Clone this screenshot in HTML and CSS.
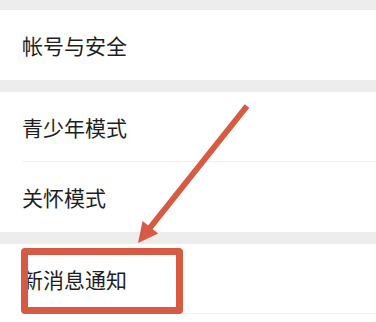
FILE: index.html
```html
<!DOCTYPE html>
<html lang="zh-CN">
<head>
    <meta charset="UTF-8">
    <meta name="viewport" content="width=device-width, initial-scale=1.0">
    <title>设置</title>
    <link rel="stylesheet" href="styles.css">
</head>
<body>
    <div class="settings">
        <!-- 分组间隔 -->
        <div class="gap gap-top"></div>
        <div class="group">
            <div class="item">帐号与安全</div>
        </div>

        <div class="gap"></div>
        <div class="group">
            <div class="item line">青少年模式</div>
            <div class="item">关怀模式</div>
        </div>

        <div class="gap"></div>
        <div class="group">
            <div class="item line">新消息通知</div>
        </div>

        <!-- 标注：红框 + 箭头 -->
        <div class="mark-box"></div>
        <svg class="mark-arrow" width="376" height="322" viewBox="0 0 376 322">
            <line x1="247" y1="106" x2="149" y2="229" stroke="#d75a43" stroke-width="6" stroke-linecap="butt"/>
            <polygon points="138,243 142.6,221.1 158.2,233.5" fill="#d75a43"/>
        </svg>
    </div>
</body>
</html>
```

FILE: styles.css
```css
/* 全局样式 */
body, html {
    margin: 0;
    padding: 0;
    height: 100%;
    overflow: hidden;
    background: #ffffff;
    font-family: 'Noto Sans CJK SC', 'Noto Sans', sans-serif;
}

.settings {
    position: relative;
    width: 376px;
    height: 322px;
}

/* 分组间隔 */
.gap {
    height: 12px;
    background: #ededed;
}

.gap-top {
    height: 10px;
}

.group {
    background: #ffffff;
}

/* 列表项 */
.item {
    display: flex;
    align-items: center;
    height: 70px;
    padding-left: 22px;
    font-size: 21px;
    color: #1e1e1e;
    position: relative;
}

.item.line::after {
    content: '';
    position: absolute;
    left: 22px;
    right: 0;
    bottom: 0;
    height: 1px;
    background: #efefef;
}

/* 红框标注 */
.mark-box {
    position: absolute;
    left: 21px;
    top: 248px;
    width: 148px;
    height: 52px;
    border: 7px solid #d75a43;
    border-radius: 4px;
}

.mark-arrow {
    position: absolute;
    left: 0;
    top: 0;
}
```
